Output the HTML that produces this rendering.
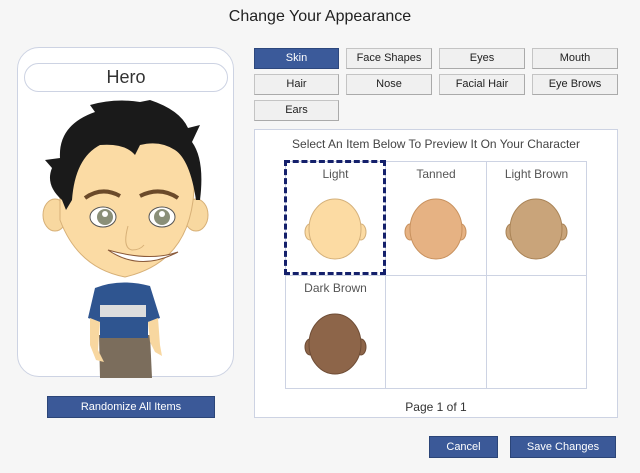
<!DOCTYPE html>
<html><head><style>
*{margin:0;padding:0;box-sizing:border-box}
body{width:640px;height:473px;background:#f6f6f6;font-family:"Liberation Sans",Tahoma,sans-serif;position:relative;overflow:hidden;color:#333}
.a{position:absolute}
.title{left:0;width:640px;top:8px;text-align:center;font-size:16px;color:#222}
.card{left:17px;top:47px;width:217px;height:330px;border:1px solid #cdd3e3;border-radius:22px;background:#fff}
.pill{left:24px;top:63px;width:204px;height:29px;border:1px solid #cdd3e3;border-radius:15px;background:#fff;text-align:center;font-size:18px;line-height:27px;color:#333}
.btn{position:absolute;height:21px;background:#f0f0f0;border:1px solid #c4c4c4;border-bottom-color:#aaa;border-right-color:#aaa;font-size:11px;text-align:center;line-height:19px;color:#222}
.btn.on{background:#3b5a9a;color:#fff;border-color:#2d477d}
.blue{position:absolute;background:#3b5998;color:#fff;font-size:11px;text-align:center;line-height:20px;height:22px;border:1px solid #2b4578}
.panel{left:254px;top:129px;width:364px;height:289px;border:1px solid #cdd3e3;background:#fff}
.cell{position:absolute;border:1px solid #cdd3e3;text-align:center;font-size:12px;color:#555;padding-top:5px}
</style></head><body>
<div class="a title">Change Your Appearance</div>
<div class="a card"></div>
<div class="a pill">Hero</div>
<svg class="a" style="left:30px;top:100px" width="190" height="278" viewBox="30 100 190 278">
 <path d="M99 335 L150 335 L152 378 L100 378Z" fill="#7b6d5c"/>
 <path d="M95 288 Q120 278 150 286 L160 318 L148 322 L148 338 L100 338 L100 322 L88 318Z" fill="#2f5590"/>
 <rect x="100" y="305" width="46" height="12" fill="#ddd"/>
 <path d="M90 318 L100 322 L98 350 L104 362 L96 360 L90 345Z" fill="#f8d7a0"/>
 <path d="M148 322 L158 318 L160 345 L162 356 L155 352 L150 342Z" fill="#f8d7a0"/>
 <ellipse cx="55" cy="215" rx="12" ry="16" fill="#f8d8a0" stroke="#d7b077"/>
 <ellipse cx="196" cy="215" rx="12" ry="16" fill="#f8d8a0" stroke="#d7b077"/>
 <path d="M60 180 Q62 130 125 125 Q195 130 194 190 Q190 262 125 277 Q78 268 60 220Z" fill="#fbdba4" stroke="#d7b077"/>
 <path d="M45 160 L60 158 Q58 125 95 112 L90 105 Q115 98 140 102 L150 100 Q180 110 188 128 L200 125 L192 142 Q205 160 200 200 L196 200 Q190 160 175 150 Q160 140 140 145 L135 155 Q125 143 100 145 Q75 158 72 200 L66 210 L62 200 Q45 185 52 168Z" fill="#1a1a1a"/>
 <path d="M85 198 Q102 186 120 196" stroke="#6b4a2a" stroke-width="4" fill="none"/>
 <path d="M140 196 Q160 186 178 198" stroke="#6b4a2a" stroke-width="4" fill="none"/>
 <ellipse cx="103" cy="217" rx="13" ry="10" fill="#fff" stroke="#555"/>
 <circle cx="105" cy="217" r="8" fill="#8a8f78"/>
 <circle cx="105" cy="214" r="3" fill="#fff"/>
 <ellipse cx="162" cy="217" rx="13" ry="10" fill="#fff" stroke="#555"/>
 <circle cx="162" cy="217" r="8" fill="#8a8f78"/>
 <circle cx="162" cy="214" r="3" fill="#fff"/>
 <path d="M128 226 Q122 248 132 250 Q140 250 144 245" stroke="#d7b077" fill="none"/>
 <path d="M108 250 Q140 272 178 252 Q150 262 108 250Z" fill="#fff" stroke="#8a5a3a"/>
</svg>
<div class="blue" style="left:47px;top:396px;width:168px">Randomize All Items</div>

<div class="btn on" style="left:254px;top:48px;width:85px">Skin</div>
<div class="btn" style="left:346px;top:48px;width:86px">Face Shapes</div>
<div class="btn" style="left:439px;top:48px;width:86px">Eyes</div>
<div class="btn" style="left:532px;top:48px;width:86px">Mouth</div>
<div class="btn" style="left:254px;top:74px;width:85px">Hair</div>
<div class="btn" style="left:346px;top:74px;width:86px">Nose</div>
<div class="btn" style="left:439px;top:74px;width:86px">Facial Hair</div>
<div class="btn" style="left:532px;top:74px;width:86px">Eye Brows</div>
<div class="btn" style="left:254px;top:100px;width:85px">Ears</div>

<div class="a panel"></div>
<div class="a" style="left:254px;top:137px;width:364px;text-align:center;font-size:12px;color:#444">Select An Item Below To Preview It On Your Character</div>
<div class="cell" style="left:285px;top:161px;width:101px;height:115px">Light</div>
<div class="cell" style="left:385px;top:161px;width:102px;height:115px">Tanned</div>
<div class="cell" style="left:486px;top:161px;width:101px;height:115px">Light Brown</div>
<div class="cell" style="left:285px;top:275px;width:101px;height:114px">Dark Brown</div>
<div class="cell" style="left:385px;top:275px;width:102px;height:114px"></div>
<div class="cell" style="left:486px;top:275px;width:101px;height:114px"></div>
<div class="a" style="left:284px;top:160px;width:102px;height:115px;border:3px dashed #14206b"></div>
<svg class="a" style="left:0;top:0" width="640" height="473">
 <g stroke-width="1">
  <g fill="#fcdba3" stroke="#d4b07a"><ellipse cx="310" cy="232" rx="5" ry="8"/><ellipse cx="361" cy="232" rx="5" ry="8"/><ellipse cx="335" cy="229" rx="26" ry="30"/></g>
  <g fill="#e6b283" stroke="#c8915e"><ellipse cx="410" cy="232" rx="5" ry="8"/><ellipse cx="461" cy="232" rx="5" ry="8"/><ellipse cx="436" cy="229" rx="26" ry="30"/></g>
  <g fill="#c9a47a" stroke="#a98356"><ellipse cx="511" cy="232" rx="5" ry="8"/><ellipse cx="562" cy="232" rx="5" ry="8"/><ellipse cx="536" cy="229" rx="26" ry="30"/></g>
  <g fill="#8d6549" stroke="#6e4c35"><ellipse cx="310" cy="347" rx="5" ry="8"/><ellipse cx="361" cy="347" rx="5" ry="8"/><ellipse cx="335" cy="344" rx="26" ry="30"/></g>
 </g>
</svg>
<div class="a" style="left:254px;top:400px;width:364px;text-align:center;font-size:12px;color:#333">Page 1 of 1</div>
<div class="blue" style="left:429px;top:436px;width:69px">Cancel</div>
<div class="blue" style="left:510px;top:436px;width:106px">Save Changes</div>
</body></html>
